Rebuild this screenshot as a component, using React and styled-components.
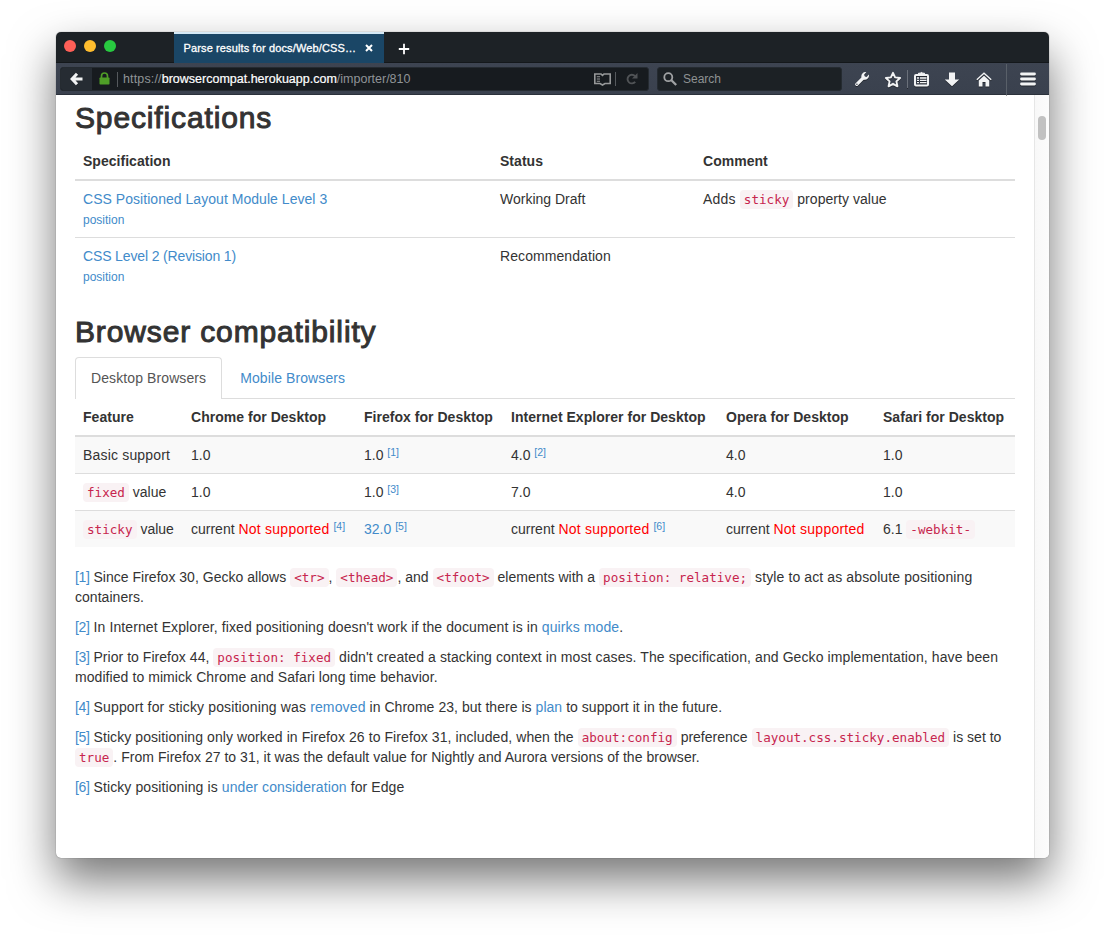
import React from "react";
import styled, { createGlobalStyle } from "styled-components";

const Global = createGlobalStyle`
  * { box-sizing: border-box; }
  body { margin: 0; background: #fff; font: 14px/20px "Liberation Sans", Arial, sans-serif; color: #333; }
`;

const Desktop = styled.div`
  height: 938px;
  padding: 32px 56px 80px;
  overflow: hidden;
`;

const Window = styled.div`
  display: flex;
  flex-direction: column;
  width: 993px;
  height: 826px;
  border-radius: 5px;
  background: #fff;
  box-shadow: 0 0 1px rgba(0, 0, 0, 0.6), 0 22px 46px rgba(0, 0, 0, 0.54);
  overflow: hidden;
`;

const TitleBar = styled.div`
  display: flex;
  height: 31px;
  background: #1d2226;
  border-bottom: 1px solid #14181b;
`;

const Lights = styled.div`
  display: flex;
  gap: 8px;
  width: 118px;
  padding: 8px 0 0 8px;
`;

const Light = styled.span`
  width: 12px;
  height: 12px;
  border-radius: 50%;
  background: ${(p) => p.$color};
`;

const Tab = styled.div`
  display: flex;
  justify-content: space-between;
  width: 210px;
  height: 31px;
  padding: 4px 11px 0 9.5px;
  background: #1a4666;
  border-top: 2px solid #d5e9f6;
  color: #fff;
  font-size: 11px;
  line-height: 20px;
  letter-spacing: 0.13px;
  -webkit-text-stroke: 0.3px #fff;
`;

const TabIcon = styled.svg`
  margin-top: 6px;
`;

const NewTab = styled.svg`
  margin: 11px 0 0 14px;
`;

const Toolbar = styled.div`
  display: flex;
  height: 32px;
  padding: 4px 0 0 4px;
  background: linear-gradient(#3d4451, #3a414e);
  border-bottom: 1px solid #2b313b;
`;

const UrlBar = styled.div`
  display: flex;
  align-items: center;
  width: 589px;
  height: 24px;
  border: 1px solid #252b31;
  border-radius: 3px;
  background: #171b1f;
  font-size: 12.5px;
  color: #909497;
  overflow: hidden;
`;

const BackButton = styled.div`
  display: flex;
  align-items: center;
  justify-content: center;
  width: 31px;
  height: 24px;
  background: #262c33;
`;

const Lock = styled.svg`
  margin: 0 0 1px 7px;
`;

const Divider = styled.span`
  width: 1px;
  height: ${(p) => p.$h || 15}px;
  margin: 0 ${(p) => p.$r || 0}px 0 ${(p) => p.$l || 0}px;
  background: ${(p) => p.$color || "#55595d"};
`;

const Url = styled.span`
  flex: 1;
  white-space: nowrap;
`;

const Host = styled.span`
  color: #fff;
  -webkit-text-stroke: 0.2px #fff;
`;

const SearchBox = styled.div`
  display: flex;
  align-items: center;
  gap: 6px;
  width: 185px;
  height: 24px;
  margin-left: 8px;
  padding-left: 5px;
  border: 1px solid #252b31;
  border-radius: 3px;
  background: #1c2125;
  font-size: 12px;
  color: #8e9193;
`;

const Actions = styled.div`
  display: flex;
  flex: 1;
  height: 24px;
  align-items: center;
  padding-left: 12px;
  filter: drop-shadow(0 1px 0.5px rgba(0, 0, 0, 0.4));
`;

const Action = styled.svg`
  flex: none;
  margin-right: ${(p) => p.$gap}px;
`;

const Body = styled.div`
  display: flex;
  flex: 1;
`;

const Page = styled.main`
  width: 978px;
  padding: 5px 19px 0;
`;

const Scrollbar = styled.div`
  width: 15px;
  padding: 21px 0 0 3px;
  border-left: 1px solid #e6e6e6;
  background: linear-gradient(90deg, #f8f8f8, #fcfcfc);
`;

const Thumb = styled.div`
  width: 8px;
  height: 24px;
  border-radius: 4px;
  background: #c1c1c1;
`;

const Heading = styled.h2`
  margin: 0 0 9px;
  padding-top: 1px;
  font-size: 30px;
  line-height: 33px;
  font-weight: 500;
  letter-spacing: 0.86px;
  -webkit-text-stroke: 1px #333;
`;

const Table = styled.table`
  width: 940px;
  margin: 0 0 20px;
  table-layout: fixed;
  border-collapse: separate;
  border-spacing: 0;
  white-space: nowrap;

  tbody tr + tr > td { border-top: 1px solid #ddd; }
`;

const Th = styled.th`
  height: 38px;
  padding: 8px;
  text-align: left;
  border-bottom: 2px solid #ddd;
  letter-spacing: 0.03px;
`;

const Row = styled.tr`
  background: ${(p) => (p.$shaded ? "#f9f9f9" : "transparent")};
`;

const Td = styled.td`
  padding: 8px;
  vertical-align: top;
`;

const Text = styled.span`
  letter-spacing: ${(p) => p.$ls}px;
`;

const Link = styled.a`
  color: #428bca;
`;

const SmallLink = styled(Link)`
  font-size: 12px;
  line-height: 1;
`;

const Code = styled.code`
  padding: 2px 4px;
  border-radius: 4px;
  background: #f9f2f4;
  color: #c7254e;
  font-family: "DejaVu Sans Mono", monospace;
  font-size: 12.6px;
  line-height: 15px;
  letter-spacing: 0;
`;

const Unsupported = styled.span`
  color: #f00;
  letter-spacing: 0.24px;
`;

const Sup = styled.sup`
  position: relative;
  top: -0.4em;
  font-size: 10.5px;
  line-height: 0;
  vertical-align: baseline;
  color: #428bca;
`;

const Tabs = styled.div`
  display: flex;
  gap: 2px;
  height: 42px;
  border-bottom: 1px solid #ddd;
`;

const PageTab = styled.div`
  height: 42px;
  padding: ${(p) => (p.$active ? "10px 15px" : "11px 16px")};
  border: ${(p) => (p.$active ? "1px solid #ddd" : "0")};
  border-bottom: 0;
  border-radius: 4px 4px 0 0;
  background: ${(p) => (p.$active ? "#fff" : "transparent")};
  color: ${(p) => (p.$active ? "#555" : "#428bca")};
  letter-spacing: 0.1px;
`;

const Note = styled.p`
  margin: 0 0 10px;
  white-space: nowrap;
`;

const Line = styled.span`
  display: block;
  letter-spacing: ${(p) => p.$ls || 0}px;
`;

const RefLink = styled(Link)`
  letter-spacing: -0.35px;
`;

const white = "#f2f3f4";

function Chrome() {
  return (
    <>
      <TitleBar>
        <Lights>
          <Light $color="#ff5f57" />
          <Light $color="#ffbd2e" />
          <Light $color="#28c940" />
        </Lights>
        <Tab>
          <span>Parse results for docs/Web/CSS…</span>
          <TabIcon width="8" height="8" viewBox="0 0 8 8" stroke="#fff" strokeWidth="2">
            <path d="M1 1l6 6M7 1l-6 6" />
          </TabIcon>
        </Tab>
        <NewTab width="12" height="12" viewBox="0 0 12 12" stroke="#fff" strokeWidth="1.800">
          <path d="M6 .8v10.400M.8 6h10.400" />
        </NewTab>
      </TitleBar>
      <Toolbar>
        <UrlBar>
          <BackButton>
            <svg width="14" height="14" viewBox="0 0 14 14" fill="none" stroke={white} strokeWidth="3">
              <path d="M7 1.800L2.100 7l4.900 5.200M2.800 7h9.700" />
            </svg>
          </BackButton>
          <Lock width="11" height="13" viewBox="0 0 11 13">
            <path d="M2.500 6V4a3 3 0 0 1 6 0v2" fill="none" stroke="#4f9e27" strokeWidth="1.700" />
            <rect x="0.500" y="5.500" width="10" height="7" rx="0.800" fill="#4f9e27" />
          </Lock>
          <Divider $l={7} $r={5} />
          <Url>
            <Text $ls={0.15}>https://</Text>
            <Host>browsercompat.herokuapp.com</Host>/importer/810
          </Url>
          <svg width="17" height="13" viewBox="0 0 17 13" fill="none" stroke="#969899" strokeWidth="1.600">
            <path d="M8.500 2.400L7 1H.8v9.500h5.200L8.500 12l2.500-1.500h5.200V1H10z" />
            <path d="M2.800 3.800h3.200M2.800 6h3.200M2.800 8.200h3.200" strokeWidth="1.100" />
          </svg>
          <Divider $l={4} $r={10} $h={14} />
          <svg width="12" height="12" viewBox="0 0 12 12">
            <path d="M9.200 8.800A4.300 4.300 0 1 1 9 3.200" fill="none" stroke="#505356" strokeWidth="1.900" />
            <path d="M11.500 0v5.600H6z" fill="#505356" />
          </svg>
          <Divider $l={9} $color="transparent" />
        </UrlBar>
        <SearchBox>
          <svg width="14" height="14" viewBox="0 0 14 14" fill="none" stroke="#a0a2a4">
            <circle cx="5.300" cy="5.200" r="4" strokeWidth="1.800" />
            <path d="M8.400 8.200l4.800 4.800" strokeWidth="2.300" />
          </svg>
          <span>Search</span>
        </SearchBox>
        <Actions>
          <Action $gap={14} width="16" height="16" viewBox="0 0 16 16">
            <path d="M2.800 13.400L9.500 6.700" stroke={white} strokeWidth="3.200" strokeLinecap="round" />
            <path d="M12.300 1.200A4.200 4.200 0 0 0 7.500 6.500l2.200 2.200A4.300 4.300 0 0 0 14.900 3.600l-2.300 2.300-2-.4-.4-2z" fill={white} />
            <circle cx="2.900" cy="13.200" r=".8" fill="#3b424e" />
          </Action>
          <Action $gap={5} width="18" height="17" viewBox="0 0 18 17">
            <path d="M9 1.800l2.100 4.600 5 .6-3.700 3.400 1 4.900L9 12.800l-4.400 2.500 1-4.900L1.900 7l5-.6z" fill="none" stroke={white} strokeWidth="1.900" strokeLinejoin="round" />
          </Action>
          <Divider $h={18} $color="#6a707a" $r={6} />
          <Action $gap={16} width="15" height="16" viewBox="0 0 15 16">
            <path d="M4.500 3.500V2.200h1.700a1.500 1.500 0 0 1 2.600 0h1.700v1.300" fill={white} stroke={white} />
            <rect x="1" y="4" width="13" height="10.500" rx="1" fill="none" stroke={white} strokeWidth="2" />
            <path d="M3 7h2M6 7h6.500M3 9.300h2M6 9.300h6.500M3 11.600h2M6 11.600h6.500" stroke={white} strokeWidth="1.300" />
          </Action>
          <Action $gap={16} width="15" height="15" viewBox="0 0 15 15" fill={white}>
            <path d="M4 .5h6v7h4.200L7 14.300-.2 7.500H4z" />
          </Action>
          <Action $gap={14} width="16" height="15" viewBox="0 0 16 15">
            <path d="M.8 7.700L8 1.200l7.200 6.500" fill="none" stroke={white} strokeWidth="1.400" />
            <path d="M2.800 8.400L8 3.700l5.200 4.700V14.500H9.500V10h-3v4.500H2.800z" fill={white} />
          </Action>
          <Divider $h={31} $color="#596069" $r={13} />
          <svg width="16" height="14" viewBox="0 0 16 14" stroke={white} strokeWidth="2.800" strokeLinecap="round">
            <path d="M1.500 2h13M1.500 7h13M1.500 12h13" />
          </svg>
        </Actions>
      </Toolbar>
    </>
  );
}

const Ref = ({ n }) => <RefLink>[{n}]</RefLink>;

function Specifications() {
  return (
    <>
      <Heading>Specifications</Heading>
      <Table>
        <colgroup>
          <col width="417" />
          <col width="203" />
          <col />
        </colgroup>
        <thead>
          <tr>
            <Th>Specification</Th>
            <Th>Status</Th>
            <Th>Comment</Th>
          </tr>
        </thead>
        <tbody>
          <Row>
            <Td>
              <Link><Text $ls={0.04}>CSS Positioned Layout Module Level 3</Text></Link>
              <br />
              <SmallLink>position</SmallLink>
            </Td>
            <Td>Working Draft</Td>
            <Td><Text $ls={0.2}>Adds </Text><Code>sticky</Code><Text $ls={0.05}> property value</Text></Td>
          </Row>
          <Row>
            <Td>
              <Link><Text $ls={-0.14}>CSS Level 2 (Revision 1)</Text></Link>
              <br />
              <SmallLink>position</SmallLink>
            </Td>
            <Td><Text $ls={0.08}>Recommendation</Text></Td>
            <Td />
          </Row>
        </tbody>
      </Table>
    </>
  );
}

function Compatibility() {
  return (
    <>
      <Heading>Browser compatibility</Heading>
      <Tabs>
        <PageTab $active>Desktop Browsers</PageTab>
        <PageTab>Mobile Browsers</PageTab>
      </Tabs>
      <Table>
        <colgroup>
          <col width="108" />
          <col width="173" />
          <col width="147" />
          <col width="215" />
          <col width="157" />
          <col />
        </colgroup>
        <thead>
          <tr>
            <Th>Feature</Th>
            <Th>Chrome for Desktop</Th>
            <Th>Firefox for Desktop</Th>
            <Th>Internet Explorer for Desktop</Th>
            <Th>Opera for Desktop</Th>
            <Th>Safari for Desktop</Th>
          </tr>
        </thead>
        <tbody>
          <Row $shaded>
            <Td><Text $ls={0.18}>Basic support</Text></Td>
            <Td>1.0</Td>
            <Td>1.0 <Sup>[1]</Sup></Td>
            <Td>4.0 <Sup>[2]</Sup></Td>
            <Td>4.0</Td>
            <Td>1.0</Td>
          </Row>
          <Row>
            <Td><Code>fixed</Code> value</Td>
            <Td>1.0</Td>
            <Td>1.0 <Sup>[3]</Sup></Td>
            <Td>7.0</Td>
            <Td>4.0</Td>
            <Td>1.0</Td>
          </Row>
          <Row $shaded>
            <Td><Code>sticky</Code> value</Td>
            <Td>current <Unsupported>Not supported</Unsupported> <Sup>[4]</Sup></Td>
            <Td><Link>32.0</Link> <Sup>[5]</Sup></Td>
            <Td>current <Unsupported>Not supported</Unsupported> <Sup>[6]</Sup></Td>
            <Td>current <Unsupported>Not supported</Unsupported></Td>
            <Td>6.1 <Code>-webkit-</Code></Td>
          </Row>
        </tbody>
      </Table>
    </>
  );
}

function Footnotes() {
  return (
    <>
      <Note>
        <Line $ls={0.02}>
          <Ref n={1} /> Since Firefox 30, Gecko allows <Code>&lt;tr&gt;</Code>, <Code>&lt;thead&gt;</Code>, and{" "}
          <Code>&lt;tfoot&gt;</Code> elements with a <Code>position: relative;</Code>
          <Text $ls={0.11}> style to act as absolute positioning</Text>
        </Line>
        <Line $ls={0.04}>containers.</Line>
      </Note>
      <Note>
        <Line $ls={0.1}>
          <Ref n={2} /> In Internet Explorer, fixed positioning doesn't work if the document is in <Link>quirks mode</Link>.
        </Line>
      </Note>
      <Note>
        <Line $ls={0.04}>
          <Ref n={3} /> Prior to Firefox 44, <Code>position: fixed</Code>
          <Text $ls={0.096}> didn't created a stacking context in most cases. The specification, and Gecko implementation, have been</Text>
        </Line>
        <Line $ls={0.07}>modified to mimick Chrome and Safari long time behavior.</Line>
      </Note>
      <Note>
        <Line $ls={0.14}>
          <Ref n={4} /> Support for sticky positioning was <Link>removed</Link>
          <Text $ls={0.04}> in Chrome 23, but there is <Link>plan</Link> to support it in the future.</Text>
        </Line>
      </Note>
      <Note>
        <Line $ls={0.08}>
          <Ref n={5} /> Sticky positioning only worked in Firefox 26 to Firefox 31, included, when the{" "}
          <Code>about:config</Code> <Text $ls={0}>preference</Text> <Code>layout.css.sticky.enabled</Code> <Text $ls={0}>is set to</Text>
        </Line>
        <Line $ls={0.035}>
          <Code>true</Code>. From Firefox 27 to 31, it was the default value for Nightly and Aurora versions of the browser.
        </Line>
      </Note>
      <Note>
        <Line $ls={0.1}>
          <Ref n={6} /> Sticky positioning is <Link>under consideration</Link> for Edge
        </Line>
      </Note>
    </>
  );
}

export default function App() {
  return (
    <Desktop>
      <Global />
      <Window>
        <Chrome />
        <Body>
          <Page>
            <Specifications />
            <Compatibility />
            <Footnotes />
          </Page>
          <Scrollbar>
            <Thumb />
          </Scrollbar>
        </Body>
      </Window>
    </Desktop>
  );
}
